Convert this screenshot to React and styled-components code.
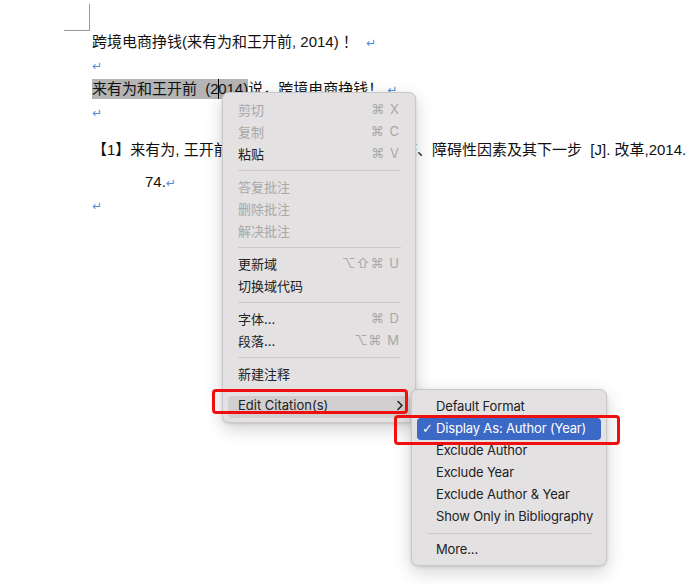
import React from "react";
import styled, { createGlobalStyle } from "styled-components";

const Global = createGlobalStyle`
  html, body { margin: 0; padding: 0; background: #fff; }
  body { width: 689px; height: 584px; overflow: hidden; }
`;

const Page = styled.div`
  position: relative;
  width: 689px;
  height: 584px;
  overflow: hidden;
  background: #fff;
  font-family: "Liberation Sans", "Noto Sans CJK SC", sans-serif;
  color: #111;
`;

const Corner = styled.div`
  width: 25px;
  height: 26px;
  margin: 4px 0 0 64px;
  border-right: 1.5px solid #9a9a9a;
  border-bottom: 1.5px solid #9a9a9a;
`;

const Doc = styled.div`
  margin-top: -1.5px;
  padding-left: 92px;
  font-size: 15px;
  line-height: 23.5px;
  white-space: pre;
`;

const Para = styled.div`
  height: 23.5px;
  margin-top: ${(p) => p.$mt || 0}px;
  padding-left: ${(p) => p.$indent || 0}px;
`;

const Ret = styled.span`
  color: #4a8fe0;
  font-size: 12px;
  line-height: 0;
  margin-left: ${(p) => p.$ml ?? 4}px;
  font-family: "DejaVu Sans", sans-serif;
`;

const Sel = styled.span`
  background: #b4b4b4;
  padding: 1px 0 2px;
`;

const Caret = styled.span`
  display: inline-block;
  width: 0;
  height: 20px;
  border-left: 1.5px solid #000;
  vertical-align: -5px;
  margin: 0 -0.75px;
`;

const Menu = styled.div`
  position: absolute;
  left: ${(p) => p.$x}px;
  top: ${(p) => p.$y}px;
  width: ${(p) => p.$w}px;
  box-sizing: border-box;
  padding: 5.5px 0 4.5px;
  background: #e3e1e1;
  border: 0.5px solid #c9c7c7;
  border-radius: 7px;
  box-shadow: 0 6px 18px rgba(0, 0, 0, 0.18), 0 1px 3px rgba(0, 0, 0, 0.12);
  font-family: "Inter", "Noto Sans CJK SC", sans-serif;
  font-size: 13px;
  white-space: nowrap;
`;

const Item = styled.div`
  height: 22px;
  margin: 0 5px;
  padding: 0 ${(p) => p.$pr ?? 10}px ${(p) => p.$pb ?? 1}px ${(p) => p.$pl ?? 10}px;
  box-sizing: border-box;
  border-radius: 4px;
  display: flex;
  align-items: center;
  justify-content: space-between;
  color: ${(p) => (p.$disabled ? "#a9a7a7" : p.$active ? "#fff" : "#222")};
  background: ${(p) => (p.$active ? "#3c68c6" : p.$hover ? "#d1cfcf" : "transparent")};
  position: relative;
`;

const SubLabel = styled.span`
  letter-spacing: -0.15px;
`;

const Check = styled.span`
  position: absolute;
  left: 5px;
  font-size: 13px;
  font-family: "DejaVu Sans", sans-serif;
`;

const Shortcut = styled.span`
  color: #a9a7a7;
  font-family: "Inter", "DejaVu Sans", sans-serif;
  letter-spacing: 1px;
  font-size: 13px;
`;

const Sep = styled.div`
  height: 1px;
  margin: 5px 14px 5px 15px;
  background: #cbc9c9;
`;

const RedBox = styled.div`
  position: absolute;
  left: ${(p) => p.$x}px;
  top: ${(p) => p.$y}px;
  width: ${(p) => p.$w}px;
  height: ${(p) => p.$h}px;
  box-sizing: border-box;
  border: 3px solid #f00f0f;
  border-radius: 4px;
`;

const Chevron = () => (
  <svg width="8" height="11" viewBox="0 0 8 11">
    <path d="M2 1.5 L6 5.5 L2 9.5" fill="none" stroke="#222" strokeWidth="1.6" strokeLinecap="round" strokeLinejoin="round" />
  </svg>
);

const mainItems = [
  { t: "剪切", k: "⌘ X", d: true },
  { t: "复制", k: "⌘ C", d: true },
  { t: "粘贴", k: "⌘ V" },
  "sep",
  { t: "答复批注", d: true },
  { t: "删除批注", d: true },
  { t: "解决批注", d: true },
  "sep",
  { t: "更新域", k: "⌥⇧⌘ U" },
  { t: "切换域代码" },
  "sep",
  { t: "字体...", k: "⌘ D" },
  { t: "段落...", k: "⌥⌘ M" },
  "sep",
  { t: "新建注释" },
  "sep",
];

const subItems = [
  { t: "Default Format" },
  { t: "Display As: Author (Year)", a: true },
  { t: "Exclude Author" },
  { t: "Exclude Year" },
  { t: "Exclude Author & Year" },
  { t: "Show Only in Bibliography" },
  "sep",
  { t: "More..." },
];

export default function App() {
  return (
    <Page>
      <Global />
      <Corner />
      <Doc>
        <Para>
          跨境电商挣钱(来有为和王开前, 2014) ！<Ret $ml={8}>↵</Ret>
        </Para>
        <Para>
          <Ret $ml={0}>↵</Ret>
        </Para>
        <Para>
          <Sel>
            {"来有为和王开前  (2"}
            <Caret />
            {"014)"}
          </Sel>
          说，跨境电商挣钱！<Ret>↵</Ret>
        </Para>
        <Para>
          <Ret $ml={0}>↵</Ret>
        </Para>
        <Para $mt={14}>
          【1】来有为, 王开前. 中国跨境电子商务发展形态、障碍性因素及其下一步  [J]. 改革,2014.
        </Para>
        <Para $mt={8.5} $indent={53}>
          74.<Ret $ml={0}>↵</Ret>
        </Para>
        <Para>
          <Ret $ml={0}>↵</Ret>
        </Para>
      </Doc>

      <Menu $x={222} $y={92} $w={194}>
        {mainItems.map((it, i) =>
          it === "sep" ? (
            <Sep key={i} />
          ) : (
            <Item key={i} $disabled={it.d}>
              <span>{it.t}</span>
              {it.k && <Shortcut>{it.k}</Shortcut>}
            </Item>
          )
        )}
        <Item $hover $pr={6} $pb={3}>
          <span>Edit Citation(s)</span>
          <Chevron />
        </Item>
      </Menu>

      <Menu $x={411} $y={389} $w={196}>
        {subItems.map((it, i) =>
          it === "sep" ? (
            <Sep key={i} />
          ) : (
            <Item key={i} $active={it.a} $pl={19}>
              {it.a && <Check>✓</Check>}
              <SubLabel>{it.t}</SubLabel>
            </Item>
          )
        )}
      </Menu>

      <RedBox $x={212} $y={389} $w={196} $h={25} />
      <RedBox $x={394} $y={415} $w={226} $h={30} />
    </Page>
  );
}
